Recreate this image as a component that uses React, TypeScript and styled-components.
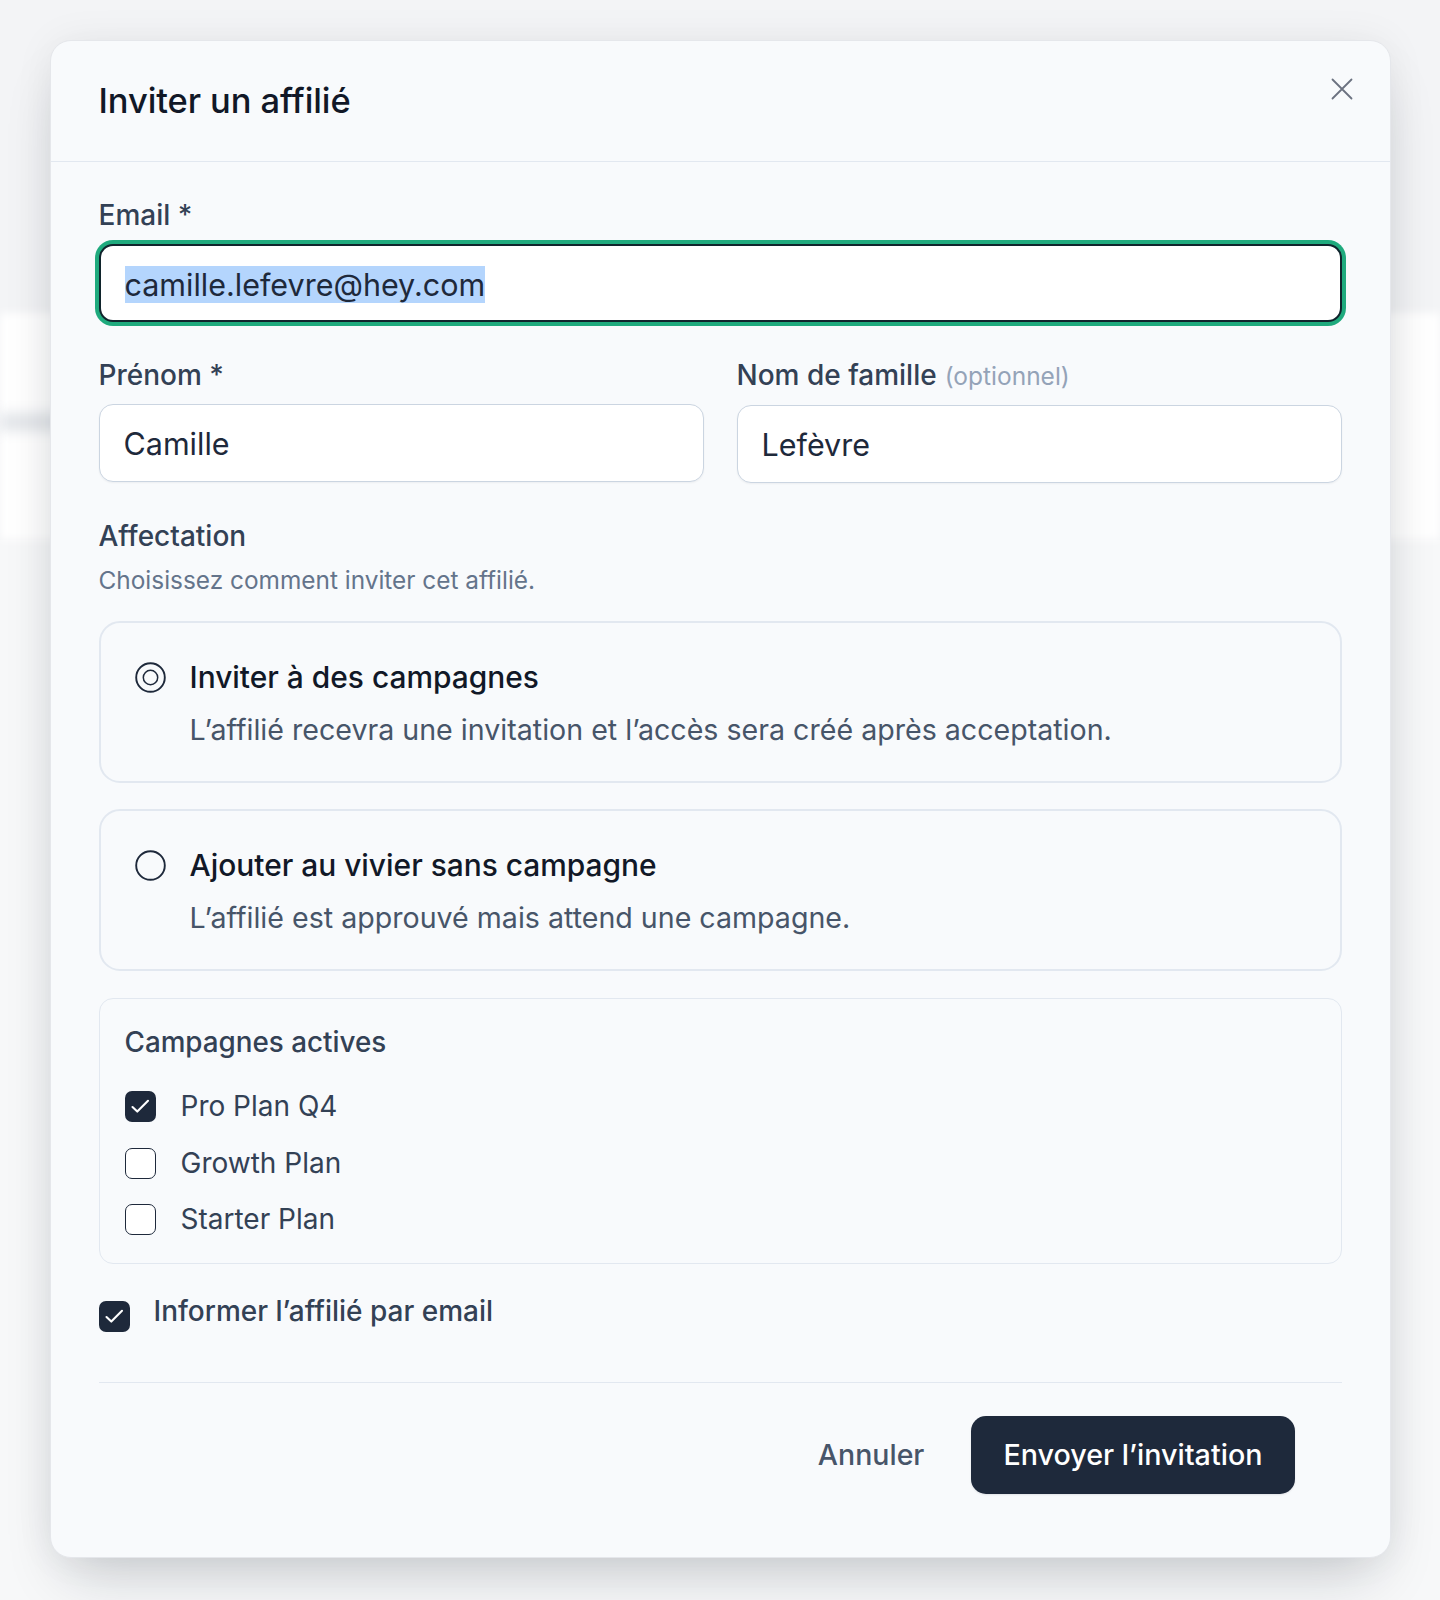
import React from "react";
import styled, { createGlobalStyle } from "styled-components";

const GlobalStyle = createGlobalStyle`
  html, body { margin: 0; padding: 0; }
  body {
    background: #f3f4f6;
    font-family: Inter, "Noto Sans", "Liberation Sans", sans-serif;
    -webkit-font-smoothing: antialiased;
    min-height: 1600px;
  }
  * { box-sizing: border-box; }
`;

const Page = styled.div`
  position: relative;
  min-height: 1600px;
  padding-top: 40px;
  overflow: hidden;
`;

/* blurred page content behind the modal overlay */
const Backdrop = styled.div`
  position: absolute;
  inset: 0;
  padding-top: 313px;
  z-index: 0;
`;

const BackPanel = styled.div`
  height: 227px;
  background: #ffffff;
  filter: blur(5px);
  padding-top: 100px;
`;

const BackBar = styled.div`
  width: 70px;
  height: 18px;
  background: #e3e6ea;
  filter: blur(4px);
`;

const BackLower = styled.div`
  height: 1060px;
  background: #f7f8f9;
`;

const Modal = styled.div`
  position: relative;
  z-index: 1;
  width: 1341px;
  margin: 0 auto;
  background: #f8fafc;
  border: 1px solid #e5e7eb;
  border-radius: 21px;
  box-shadow: 0 30px 60px -16px rgba(15, 23, 42, 0.2), 0 0 40px rgba(15, 23, 42, 0.06);
`;

const Header = styled.div`
  display: flex;
  justify-content: space-between;
  align-items: flex-start;
  height: 121px;
  padding: 40px 37px 40px 48px;
  border-bottom: 1px solid #e2e8f0;
`;

const Title = styled.h2`
  margin: 0;
  font-size: 34.5px;
  line-height: 40px;
  font-weight: 500;
  color: #111827;
  letter-spacing: -0.1px;
`;

const CloseButton = styled.button`
  display: flex;
  align-items: center;
  justify-content: center;
  width: 22px;
  height: 22px;
  margin-top: -3px;
  padding: 0;
  border: none;
  background: transparent;
  color: #6b7280;
  cursor: pointer;
`;

const Body = styled.div`
  padding: 36px 48px 63px;
  display: flex;
  flex-direction: column;
`;

const Field = styled.div<{ $mt?: number }>`
  display: flex;
  flex-direction: column;
  gap: 11px;
  margin-top: ${(p) => p.$mt ?? 0}px;
  min-width: 0;
`;

const Label = styled.label`
  font-size: 28px;
  line-height: 35px;
  font-weight: 500;
  color: #334155;
`;

const Optional = styled.span`
  font-size: 24.5px;
  font-weight: 400;
  color: #94a3b8;
  margin-left: 8px;
`;

const TextInput = styled.input`
  width: 100%;
  height: 78px;
  padding: 0 24px;
  border: 1.5px solid #cbd5e1;
  border-radius: 14px;
  background: #ffffff;
  font-family: inherit;
  font-size: 30.5px;
  color: #1e293b;
  outline: none;
  box-shadow: 0 1px 2px rgba(15, 23, 42, 0.05);
`;

const FocusedInput = styled.div`
  display: flex;
  align-items: center;
  height: 78px;
  padding: 2px 24px 0;
  border: 2px solid #10242c;
  border-radius: 14px;
  background: #ffffff;
  box-shadow: 0 0 0 4px #1faa7d;
  font-size: 30.5px;
  color: #1e293b;
`;

const Selected = styled.span`
  background: #b4d5fd;
  line-height: 37px;
`;

const NameRow = styled.div`
  display: grid;
  grid-template-columns: 1fr 1fr;
  column-gap: 33px;
  margin-top: 36px;
`;

const Helper = styled.p`
  margin: 9px 0 0;
  font-size: 24.4px;
  line-height: 34px;
  color: #64748b;
`;

const OptionCard = styled.div<{ $mt: number }>`
  display: flex;
  gap: 24px;
  margin-top: ${(p) => p.$mt}px;
  padding: 34px 34px 31px 34px;
  border: 2px solid #e2e8f0;
  border-radius: 21px;
  background: #f8fafc;
`;

const RadioWrap = styled.div`
  flex: none;
  width: 31px;
  height: 40px;
  display: flex;
  align-items: center;
`;

const OptionText = styled.div`
  display: flex;
  flex-direction: column;
  gap: 13px;
`;

const OptionTitle = styled.div`
  font-size: 29.9px;
  line-height: 40px;
  font-weight: 500;
  color: #111827;
`;

const OptionDesc = styled.div`
  font-size: 28.6px;
  line-height: 40px;
  color: #475569;
`;

const CampaignBox = styled.div`
  margin-top: 27px;
  padding: 26px 25px;
  border: 1px solid #e2e8f0;
  border-radius: 14px;
  display: flex;
  flex-direction: column;
`;

const BoxTitle = styled.div`
  font-size: 27.8px;
  line-height: 35px;
  font-weight: 500;
  color: #334155;
`;

const CheckList = styled.div`
  display: flex;
  flex-direction: column;
  gap: 21.5px;
  margin-top: 29px;
`;

const CheckRow = styled.div`
  display: flex;
  align-items: center;
  gap: 25px;
  height: 35px;
`;

const CheckText = styled.span`
  font-size: 28px;
  line-height: 35px;
  color: #334155;
`;

const Box = styled.span<{ $checked: boolean }>`
  flex: none;
  display: flex;
  align-items: center;
  justify-content: center;
  width: 31px;
  height: 31px;
  border-radius: 7px;
  border: ${(p) => (p.$checked ? "none" : "1.8px solid #1e293b")};
  background: ${(p) => (p.$checked ? "#1e293b" : "#ffffff")};
`;

const NotifyRow = styled.div`
  display: flex;
  align-items: flex-start;
  gap: 24px;
  margin-top: 30px;
`;

const NotifyBox = styled.div`
  margin-top: 6.5px;
`;

const NotifyText = styled.span`
  font-size: 28px;
  line-height: 35px;
  font-weight: 500;
  color: #334155;
`;

const Footer = styled.div`
  display: flex;
  justify-content: flex-end;
  align-items: center;
  gap: 23px;
  margin-top: 50px;
  padding: 33px 47px 0 0;
  border-top: 1px solid #e2e8f0;
`;

const GhostButton = styled.button`
  height: 78px;
  padding: 0 24px;
  border: none;
  background: transparent;
  font-family: inherit;
  font-size: 28.5px;
  font-weight: 500;
  color: #475569;
  cursor: pointer;
`;

const PrimaryButton = styled.button`
  height: 78px;
  padding: 0 32px;
  border: none;
  border-radius: 15px;
  background: #1e293b;
  font-family: inherit;
  font-size: 28.7px;
  font-weight: 500;
  color: #ffffff;
  cursor: pointer;
  box-shadow: 0 1px 2px rgba(15, 23, 42, 0.1);
`;

function Radio({ selected }: { selected: boolean }) {
  return (
    <svg width="31" height="31" viewBox="0 0 31 31" fill="none">
      <circle cx="15.5" cy="15.5" r="14.3" stroke="#1e293b" strokeWidth="1.9" />
      {selected && <circle cx="15.5" cy="15.5" r="7.2" stroke="#1e293b" strokeWidth="1.5" />}
    </svg>
  );
}

function Checkbox({ checked }: { checked: boolean }) {
  return (
    <Box $checked={checked}>
      {checked && (
        <svg width="31" height="31" viewBox="0 0 31 31" fill="none">
          <path d="M7.5 16l4.8 4.6L23 9.8" stroke="#ffffff" strokeWidth="2.1" strokeLinecap="round" strokeLinejoin="round" />
        </svg>
      )}
    </Box>
  );
}

const campaigns = [
  { name: "Pro Plan Q4", checked: true },
  { name: "Growth Plan", checked: false },
  { name: "Starter Plan", checked: false },
];

export default function App() {
  return (
    <>
      <GlobalStyle />
      <Page>
        <Backdrop>
          <BackPanel>
            <BackBar />
          </BackPanel>
          <BackLower />
        </Backdrop>
        <Modal role="dialog" aria-labelledby="invite-title">
          <Header>
            <Title id="invite-title">Inviter un affilié</Title>
            <CloseButton aria-label="Fermer">
              <svg width="22" height="22" viewBox="0 0 22 22" fill="none">
                <path d="M1.5 1.5l19 19M20.5 1.5l-19 19" stroke="currentColor" strokeWidth="1.8" strokeLinecap="round" />
              </svg>
            </CloseButton>
          </Header>
          <Body>
            <Field>
              <Label>Email *</Label>
              <FocusedInput>
                <Selected>camille.lefevre@hey.com</Selected>
              </FocusedInput>
            </Field>
            <NameRow>
              <Field>
                <Label>Prénom *</Label>
                <TextInput defaultValue="Camille" readOnly />
              </Field>
              <Field>
                <Label>
                  Nom de famille<Optional>(optionnel)</Optional>
                </Label>
                <TextInput defaultValue="Lefèvre" readOnly />
              </Field>
            </NameRow>
            <Field $mt={36}>
              <Label>Affectation</Label>
            </Field>
            <Helper>Choisissez comment inviter cet affilié.</Helper>
            <OptionCard $mt={24}>
              <RadioWrap>
                <Radio selected />
              </RadioWrap>
              <OptionText>
                <OptionTitle>Inviter à des campagnes</OptionTitle>
                <OptionDesc>L’affilié recevra une invitation et l’accès sera créé après acceptation.</OptionDesc>
              </OptionText>
            </OptionCard>
            <OptionCard $mt={26}>
              <RadioWrap>
                <Radio selected={false} />
              </RadioWrap>
              <OptionText>
                <OptionTitle>Ajouter au vivier sans campagne</OptionTitle>
                <OptionDesc>L’affilié est approuvé mais attend une campagne.</OptionDesc>
              </OptionText>
            </OptionCard>
            <CampaignBox>
              <BoxTitle>Campagnes actives</BoxTitle>
              <CheckList>
                {campaigns.map((c) => (
                  <CheckRow key={c.name}>
                    <Checkbox checked={c.checked} />
                    <CheckText>{c.name}</CheckText>
                  </CheckRow>
                ))}
              </CheckList>
            </CampaignBox>
            <NotifyRow>
              <NotifyBox>
                <Checkbox checked />
              </NotifyBox>
              <NotifyText>Informer l’affilié par email</NotifyText>
            </NotifyRow>
            <Footer>
              <GhostButton>Annuler</GhostButton>
              <PrimaryButton>Envoyer l’invitation</PrimaryButton>
            </Footer>
          </Body>
        </Modal>
      </Page>
    </>
  );
}
